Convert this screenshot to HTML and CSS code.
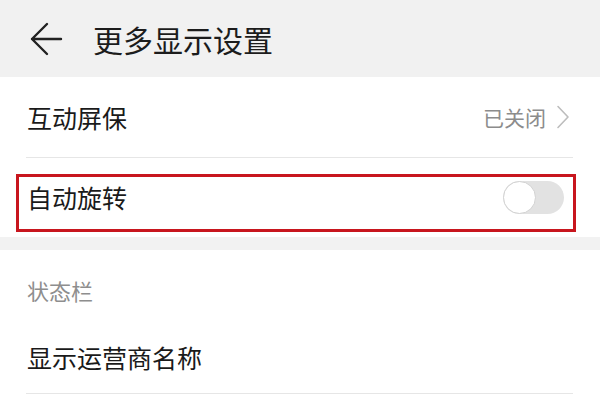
FILE: index.html
```html
<!DOCTYPE html>
<html lang="zh-CN">
<head>
<meta charset="utf-8">
<title>更多显示设置</title>
<link rel="stylesheet" href="styles.css">
</head>
<body>
<div class="screen">
  <header class="topbar">
    <svg class="back" width="40" height="40" viewBox="0 0 40 40">
      <path d="M34 20H5M20 5L5 20L20 35" fill="none" stroke="#222" stroke-width="2.4" stroke-linecap="round" stroke-linejoin="round"/>
    </svg>
    <h1 class="title">更多显示设置</h1>
  </header>

  <section class="group">
    <div class="row row-first">
      <span class="label">互动屏保</span>
      <span class="value">已关闭
        <svg class="chev" width="14" height="24" viewBox="0 0 14 24">
          <path d="M2 1.5L12 12L2 22.5" fill="none" stroke="#bdbdbd" stroke-width="1.6" stroke-linecap="round" stroke-linejoin="round"/>
        </svg>
      </span>
    </div>
    <div class="row row-last">
      <span class="label">自动旋转</span>
      <span class="switch"><span class="knob"></span></span>
    </div>
  </section>

  <div class="gap"></div>

  <section class="group">
    <div class="subhead">状态栏</div>
    <div class="row row-carrier">
      <span class="label">显示运营商名称</span>
    </div>
  </section>

  <div class="highlight"></div>
</div>
</body>
</html>
```

FILE: styles.css
```css
html, body {
  margin: 0;
  padding: 0;
  background: #ffffff;
}

body {
  font-family: "Noto Sans CJK SC", "Noto Sans", sans-serif;
  color: #1a1a1a;
}

.screen {
  position: relative;
  width: 600px;
  height: 400px;
  overflow: hidden;
  background: #ffffff;
}

.topbar {
  height: 77px;
  background: #f1f1f1;
  display: flex;
  align-items: center;
  padding-left: 27px;
  gap: 26px;
}

.back {
  display: block;
  flex: none;
}

.title {
  margin: 0;
  font-size: 30px;
  font-weight: 400;
  line-height: 1;
  color: #1c1c1c;
}

.group {
  background: #ffffff;
}

.row {
  display: flex;
  align-items: center;
  justify-content: space-between;
  margin: 0 27px 0 26px;
  padding-left: 1px;
}

.row-first {
  height: 80px;
  border-bottom: 1px solid #e6e6e6;
}

.row-last {
  height: 79px;
}

.label {
  font-size: 25px;
  line-height: 1;
  color: #1a1a1a;
}

.value {
  display: flex;
  align-items: center;
  gap: 10px;
  font-size: 21px;
  line-height: 1;
  color: #8c8c8c;
  padding-right: 3px;
}

.chev {
  display: block;
}

.switch {
  position: relative;
  width: 61px;
  height: 33px;
  border-radius: 17px;
  background: #e2e2e2;
  margin-right: 9px;
}

.knob {
  position: absolute;
  left: 0;
  top: 0;
  width: 33px;
  height: 33px;
  box-sizing: border-box;
  border-radius: 50%;
  background: #ffffff;
  border: 1.5px solid #d2d2d2;
}

.gap {
  height: 13px;
  background: #f2f2f2;
}

.subhead {
  height: 64px;
  padding-top: 8px;
  display: flex;
  align-items: center;
  margin-left: 27px;
  font-size: 22px;
  line-height: 1;
  color: #8e8e8e;
}

.row-carrier {
  height: 71px;
  border-bottom: 1px solid #e6e6e6;
}

.highlight {
  position: absolute;
  left: 16px;
  top: 174px;
  width: 560px;
  height: 58px;
  box-sizing: border-box;
  border: 3px solid #c8161e;
  pointer-events: none;
}
```
